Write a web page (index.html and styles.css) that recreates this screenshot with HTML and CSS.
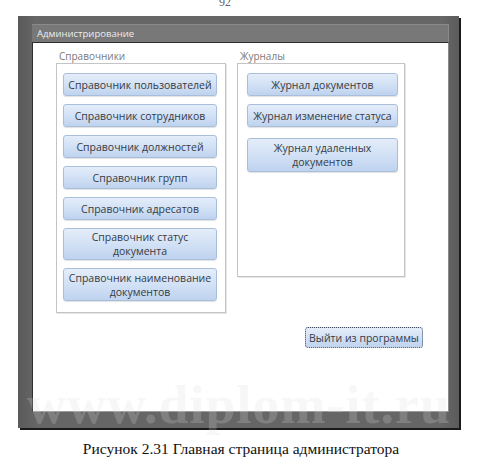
FILE: index.html
```html
<!DOCTYPE html>
<html lang="ru">
<head>
<meta charset="utf-8">
<title>Администрирование</title>
<link rel="stylesheet" href="styles.css">
</head>
<body>
<div class="page">
  <div class="pagenum">92</div>
  <div class="frame">
    <div class="window">
      <div class="titlebar">Администрирование</div>
      <div class="content">
        <div class="groups">
          <div class="group group-left">
            <div class="glabel">Справочники</div>
            <div class="gbox">
              <div class="btn">Справочник пользователей</div>
              <div class="btn">Справочник сотрудников</div>
              <div class="btn">Справочник должностей</div>
              <div class="btn">Справочник групп</div>
              <div class="btn">Справочник адресатов</div>
              <div class="btn btn-2">Справочник статус<br>документа</div>
              <div class="btn btn-2b">Справочник наименование<br>документов</div>
            </div>
          </div>
          <div class="group group-right">
            <div class="glabel">Журналы</div>
            <div class="gbox">
              <div class="btn">Журнал документов</div>
              <div class="btn">Журнал изменение статуса</div>
              <div class="btn btn-3">Журнал удаленных<br>документов</div>
            </div>
          </div>
        </div>
        <div class="exit-row">
          <div class="btn exit">Выйти из программы</div>
        </div>
      </div>
    </div>
  </div>
  <div class="caption">Рисунок 2.31 Главная страница администратора</div>
  <div class="watermark">www.diplom-it.ru</div>
</div>
</body>
</html>
```

FILE: styles.css
```css
* { box-sizing: border-box; }
html, body { margin: 0; padding: 0; background: #fff; }
.page {
  position: relative;
  width: 482px;
  height: 460px;
  overflow: hidden;
  font-family: "Open Sans", "Liberation Sans", sans-serif;
}
.pagenum {
  height: 16px;
  line-height: 4px;
  padding-left: 219px;
  font-family: "Liberation Serif", serif;
  font-size: 12px;
  color: #666;
}
.frame {
  margin-left: 18px;
  width: 441px;
  height: 412px;
  padding: 8px 10px 16px 14px;
  background: linear-gradient(90deg, #5a5a5a 0%, #666 4%, #666 96%, #5c5c5c 100%);
  box-shadow: 2px 2px 0 #1a1a1a;
}
.window {
  height: 100%;
  display: flex;
  flex-direction: column;
}
.titlebar {
  height: 18px;
  background: #787878;
  border-top: 1px solid #8a8a8a;
  border-right: 1px solid #8a8a8a;
  color: #ececec;
  font-size: 9.5px;
  line-height: 17px;
  padding-left: 5px;
}
.content {
  flex: 1;
  background: #fff;
  border-left: 1px solid #2e2e2e;
  border-top: 1px solid #2e2e2e;
  border-right: 1px solid #8a8a8a;
  border-bottom: 1px solid #9a9a9a;
  padding: 7px 0 0 23px;
}
.groups {
  display: flex;
  align-items: flex-start;
  gap: 11px;
}
.glabel {
  height: 13px;
  font-size: 10px;
  line-height: 12px;
  color: #7a7a7a;
  padding-left: 3px;
}
.gbox {
  border: 1px solid #c4c4c4;
  box-shadow: 1px 1px 0 #e6e6e6;
  display: flex;
  flex-direction: column;
  gap: 8px;
}
.group-left .gbox {
  width: 170px;
  height: 250px;
  padding: 9px 0 0 6px;
}
.group-right .gbox {
  width: 168px;
  height: 214px;
  padding: 9px 0 0 9px;
}
.btn {
  width: 154px;
  height: 23px;
  border: 1px solid #a9bedb;
  border-radius: 3px;
  background: linear-gradient(180deg, #e4edf9 0%, #d2e1f5 50%, #bfd3ef 100%);
  box-shadow: 0 1px 1px rgba(0,0,0,0.12);
  color: #363b44;
  font-size: 10.5px;
  line-height: 14px;
  text-align: center;
  display: flex;
  align-items: center;
  justify-content: center;
}
.group-right .btn { width: 151px; }
.btn-2 { height: 32px; }
.btn-2b { height: 33px; }
.btn-3 { height: 34px; margin-top: 3px; }
.exit-row {
  display: flex;
  justify-content: flex-end;
  padding-right: 25px;
  margin-top: 14px;
}
.exit {
  width: 118px;
  height: 21px;
  border: 1px dotted #3d4a5e;
  box-shadow: none;
}
.caption {
  margin-top: 11px;
  text-align: center;
  font-family: "Liberation Serif", serif;
  font-size: 15.5px;
  color: #111;
  line-height: 20px;
}
.watermark {
  position: absolute;
  left: 8px;
  top: 375px;
  width: 462px;
  text-align: center;
  font-family: "Liberation Serif", serif;
  font-weight: bold;
  font-size: 54px;
  line-height: 60px;
  letter-spacing: 1px;
  color: rgba(220, 220, 220, 0.22);
  pointer-events: none;
  white-space: nowrap;
}
```
